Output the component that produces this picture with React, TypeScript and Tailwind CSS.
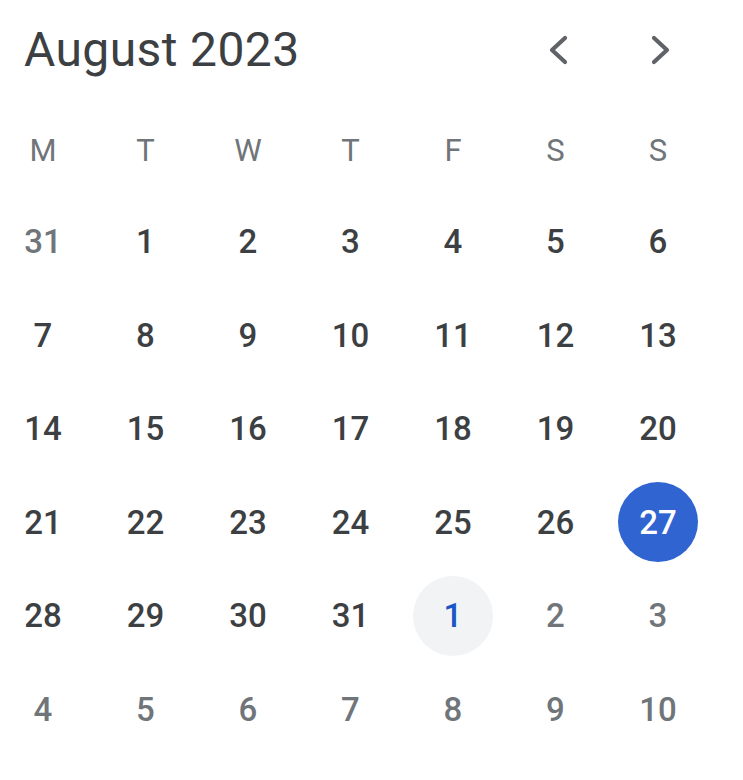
type Day = { n: number; muted?: boolean; selected?: boolean; today?: boolean };

const weekdays = ["M", "T", "W", "T", "F", "S", "S"];

function buildWeeks(): Day[][] {
  const days: Day[] = [{ n: 31, muted: true }];
  for (let i = 1; i <= 31; i++) days.push({ n: i, selected: i === 27 });
  days.push({ n: 1, muted: true, today: true });
  for (let i = 2; i <= 10; i++) days.push({ n: i, muted: true });
  const weeks: Day[][] = [];
  for (let i = 0; i < days.length; i += 7) weeks.push(days.slice(i, i + 7));
  return weeks;
}

function Chevron({ dir }: { dir: "left" | "right" }) {
  const pts = dir === "left" ? "20,4 7,16 20,28" : "8,4 21,16 8,28";
  return (
    <svg width="28" height="32" viewBox="0 0 28 32" fill="none">
      <polyline
        points={pts}
        stroke="currentColor"
        strokeWidth="4.2"
        strokeLinecap="round"
        strokeLinejoin="round"
      />
    </svg>
  );
}

function DayCell({ day }: { day: Day }) {
  if (day.selected) {
    return (
      <div className="flex items-center justify-center">
        <span className="flex h-[80px] w-[80px] items-center justify-center rounded-full bg-[#3064d1] text-white">
          {day.n}
        </span>
      </div>
    );
  }
  if (day.today) {
    return (
      <div className="flex items-center justify-center">
        <span className="flex h-[80px] w-[80px] items-center justify-center rounded-full bg-[#f1f3f4] text-[#1a57c6]">
          {day.n}
        </span>
      </div>
    );
  }
  return (
    <div
      className={
        day.muted
          ? "flex items-center justify-center text-[#70757a]"
          : "flex items-center justify-center text-[#3c4043]"
      }
    >
      {day.n}
    </div>
  );
}

export default function App() {
  const weeks = buildWeeks();

  return (
    <div className="h-[780px] w-[743px] bg-white font-['Roboto',sans-serif]">
      <div className="flex h-[100px] items-center pl-[24px] pr-[69px]">
        <h1 className="flex-1 text-[48px] font-normal tracking-[0.4px] text-[#3c4043]">
          August 2023
        </h1>
        <div className="flex items-center gap-[73px] text-[#5f6368]">
          <Chevron dir="left" />
          <Chevron dir="right" />
        </div>
      </div>

      <div className="mt-[7px] grid h-[88px] grid-cols-[repeat(7,86px)] gap-x-[16.5px] text-[31px] font-normal text-[#70757a]">
        {weekdays.map((d, i) => (
          <div key={i} className="flex items-center justify-center">
            {d}
          </div>
        ))}
      </div>

      <div className="grid grid-cols-[repeat(7,86px)] auto-rows-[93.5px] gap-x-[16.5px] text-[33px] font-medium">
        {weeks.flat().map((day, i) => (
          <DayCell key={i} day={day} />
        ))}
      </div>
    </div>
  );
}
